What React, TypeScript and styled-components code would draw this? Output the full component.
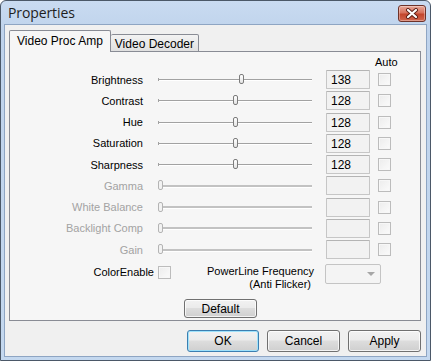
import React from 'react';
import styled, { createGlobalStyle } from 'styled-components';

const GlobalStyle = createGlobalStyle`
  html, body {
    margin: 0;
    padding: 0;
    background: #ffffff;
  }
  body {
    font-family: "Liberation Sans", Arial, sans-serif;
    font-size: 11px;
    color: #000;
  }
`;

const Window = styled.div`
  box-sizing: border-box;
  width: 431px;
  height: 361px;
  display: flex;
  flex-direction: column;
  padding: 0 3px 3px;
  border: 1px solid #4b5868;
  border-radius: 6px 6px 0 0;
  background: linear-gradient(#c9dbf1, #bfd3ec 30px, #c4d8ef);
`;

const TitleBar = styled.div`
  height: 23px;
  display: flex;
  align-items: center;
  justify-content: space-between;
  padding: 0 1px 0 4px;
  flex-shrink: 0;
`;

const TitleText = styled.span`
  font-family: "Open Sans", "Liberation Sans", sans-serif;
  font-size: 14px;
  color: #1e1e1e;
  letter-spacing: -0.1px;
`;

const CloseButton = styled.div`
  box-sizing: border-box;
  width: 28px;
  height: 17px;
  margin-top: 1px;
  display: flex;
  align-items: center;
  justify-content: center;
  border: 1px solid #6e3229;
  border-radius: 3px;
  background: linear-gradient(#e8a898, #d7715c 45%, #c3452c 55%, #d1664e);
  box-shadow: inset 0 0 0 1px rgba(255, 255, 255, 0.35);
`;

const Client = styled.div`
  flex: 1;
  display: flex;
  flex-direction: column;
  background: #f0f0f0;
  border: 1px solid #8ea5c3;
  padding: 6px 5px 0 4px;
`;

const TabStrip = styled.div`
  display: flex;
  align-items: flex-end;
  height: 21px;
  margin-bottom: -1px;
  position: relative;
  z-index: 1;
`;

const Tab = styled.div<{ $active?: boolean }>`
  box-sizing: border-box;
  height: ${(p) => (p.$active ? 22 : 18)}px;
  padding: ${(p) => (p.$active ? '3px 7px 0 7px' : '2px 4px 0 4px')};
  border: 1px solid #898c95;
  border-bottom: ${(p) => (p.$active ? 'none' : '1px solid #898c95')};
  border-left: ${(p) => (p.$active ? '1px solid #898c95' : 'none')};
  border-radius: 2px 2px 0 0;
  background: ${(p) => (p.$active ? '#f6f6f6' : 'linear-gradient(#f3f3f3, #e0e0e0)')};
  font-size: 12px;
  white-space: nowrap;
`;

const Panel = styled.div`
  box-sizing: border-box;
  height: 270px;
  border: 1px solid #898c95;
  background: #f6f6f6;
  display: flex;
  flex-direction: column;
  padding: 4px 0 0 0;
`;

const AutoHeader = styled.div`
  height: 13px;
  padding-left: 365px;
  line-height: 13px;
`;

const Rows = styled.div`
  display: grid;
  grid-auto-rows: 21.25px;
`;

const Row = styled.div`
  display: flex;
  align-items: center;
`;

const Label = styled.div<{ $disabled?: boolean }>`
  width: 133px;
  text-align: right;
  color: ${(p) => (p.$disabled ? '#a3a3a3' : '#000')};
  white-space: nowrap;
`;

const SliderBox = styled.div`
  position: relative;
  width: 162px;
  height: 19px;
  margin-left: 11px;
  display: flex;
  align-items: center;
`;

const TrackLine = styled.div<{ $disabled?: boolean }>`
  position: relative;
  flex: 1;
  margin: 0 4px;
  height: ${(p) => (p.$disabled ? 2 : 1)}px;
  background: ${(p) => (p.$disabled ? '#c2c2c2' : '#a2a2a2')};
  box-shadow: 0 1px 0 #ffffff;

  &::before {
    content: '';
    position: absolute;
    left: 0;
    top: -1px;
    width: 1px;
    height: 3px;
    background: ${(p) => (p.$disabled ? 'transparent' : '#a2a2a2')};
  }
`;

const Thumb = styled.div<{ $disabled?: boolean }>`
  position: absolute;
  top: 4px;
  box-sizing: border-box;
  width: 5px;
  height: 10px;
  border: 1px solid ${(p) => (p.$disabled ? '#b4b4b4' : '#7c7c7c')};
  border-radius: 2px;
  background: ${(p) => (p.$disabled ? '#f2f2f2' : 'linear-gradient(#ffffff, #e4e4e4)')};
`;

const ValueBox = styled.div`
  box-sizing: border-box;
  width: 44px;
  height: 19px;
  margin-left: 10px;
  padding: 2px 0 0 4px;
  border: 1px solid #c6c6c6;
  border-top-color: #b4b4b4;
  border-radius: 1px;
  background: #f2f2f2;
  font-size: 12px;
  line-height: 14px;
`;

const CheckBox = styled.div`
  box-sizing: border-box;
  width: 13px;
  height: 13px;
  margin-left: 8px;
  border: 1px solid #bcbcbc;
  background: linear-gradient(135deg, #ececec, #fbfbfb);
  box-shadow: inset 0 0 0 1px #f7f7f7;
`;

const BottomRow = styled.div`
  display: flex;
  align-items: flex-start;
  margin-top: 3px;
`;

const ColorLabel = styled.div`
  width: 144px;
  text-align: right;
  padding-top: 3px;
  color: #000;
  white-space: nowrap;
`;

const ColorCheck = styled(CheckBox)`
  margin: 3px 0 0 4px;
`;

const PowerLabel = styled.div`
  width: 104px;
  margin-left: 36px;
  text-align: right;
  line-height: 13px;
  padding-top: 2px;
  font-size: 11px;
  white-space: nowrap;
`;

const Combo = styled.div`
  box-sizing: border-box;
  width: 56px;
  height: 20px;
  margin-left: 14px;
  margin-top: 1px;
  border: 1px solid #c4c4c4;
  border-radius: 2px;
  background: #f4f4f4;
  display: flex;
  align-items: center;
  justify-content: flex-end;
  padding-right: 5px;
`;

const Arrow = styled.div`
  width: 0;
  height: 0;
  border-left: 4px solid transparent;
  border-right: 4px solid transparent;
  border-top: 4px solid #a6a6a6;
`;

const DefaultRow = styled.div`
  display: flex;
  margin-top: 8px;
  padding-left: 174px;
`;

const Button = styled.div<{ $primary?: boolean; $w?: number; $h?: number }>`
  box-sizing: border-box;
  width: ${(p) => p.$w ?? 73}px;
  height: ${(p) => p.$h ?? 22}px;
  display: flex;
  align-items: center;
  justify-content: center;
  border: 1px solid ${(p) => (p.$primary ? '#3c7fb1' : '#707070')};
  border-radius: 3px;
  background: linear-gradient(#f2f2f2, #ebebeb 45%, #dddddd 50%, #cfcfcf);
  box-shadow: inset 0 0 0 1px ${(p) => (p.$primary ? '#9fe2fb' : 'rgba(255,255,255,0.75)')};
  font-size: 12px;
`;

const ButtonBar = styled.div`
  display: flex;
  justify-content: flex-end;
  gap: 8px;
  margin-top: 9px;
`;

type Control = {
  name: string;
  value?: number;
  disabled?: boolean;
};

const controls: Control[] = [
  { name: 'Brightness', value: 138 },
  { name: 'Contrast', value: 128 },
  { name: 'Hue', value: 128 },
  { name: 'Saturation', value: 128 },
  { name: 'Sharpness', value: 128 },
  { name: 'Gamma', disabled: true },
  { name: 'White Balance', disabled: true },
  { name: 'Backlight Comp', disabled: true },
  { name: 'Gain', disabled: true },
];

const Slider: React.FC<{ value?: number; disabled?: boolean }> = ({ value, disabled }) => {
  const left = disabled ? 4 : 2 + ((value ?? 0) / 255) * 154;
  return (
    <SliderBox>
      <TrackLine $disabled={disabled} />
      <Thumb $disabled={disabled} style={{ left: `${left}px` }} />
    </SliderBox>
  );
};

const App: React.FC = () => {
  return (
    <>
      <GlobalStyle />
      <Window>
        <TitleBar>
          <TitleText>Properties</TitleText>
          <CloseButton>
            <svg width="14" height="11" viewBox="0 0 14 11">
              <path d="M3 2 L11 9 M11 2 L3 9" stroke="#5a1d14" strokeWidth="4" strokeLinecap="round" />
              <path d="M3 2 L11 9 M11 2 L3 9" stroke="#ffffff" strokeWidth="2.2" strokeLinecap="round" />
            </svg>
          </CloseButton>
        </TitleBar>
        <Client>
          <TabStrip>
            <Tab $active>Video Proc Amp</Tab>
            <Tab>Video Decoder</Tab>
          </TabStrip>
          <Panel>
            <AutoHeader>Auto</AutoHeader>
            <Rows>
              {controls.map((c) => (
                <Row key={c.name}>
                  <Label $disabled={c.disabled}>{c.name}</Label>
                  <Slider value={c.value} disabled={c.disabled} />
                  <ValueBox>{c.value ?? ''}</ValueBox>
                  <CheckBox />
                </Row>
              ))}
            </Rows>
            <BottomRow>
              <ColorLabel>ColorEnable</ColorLabel>
              <ColorCheck />
              <PowerLabel>
                PowerLine Frequency
                <br />
                (Anti Flicker)
              </PowerLabel>
              <Combo>
                <Arrow />
              </Combo>
            </BottomRow>
            <DefaultRow>
              <Button $h={19}>Default</Button>
            </DefaultRow>
          </Panel>
          <ButtonBar>
            <Button $primary $w={72}>OK</Button>
            <Button>Cancel</Button>
            <Button>Apply</Button>
          </ButtonBar>
        </Client>
      </Window>
    </>
  );
};

export default App;
